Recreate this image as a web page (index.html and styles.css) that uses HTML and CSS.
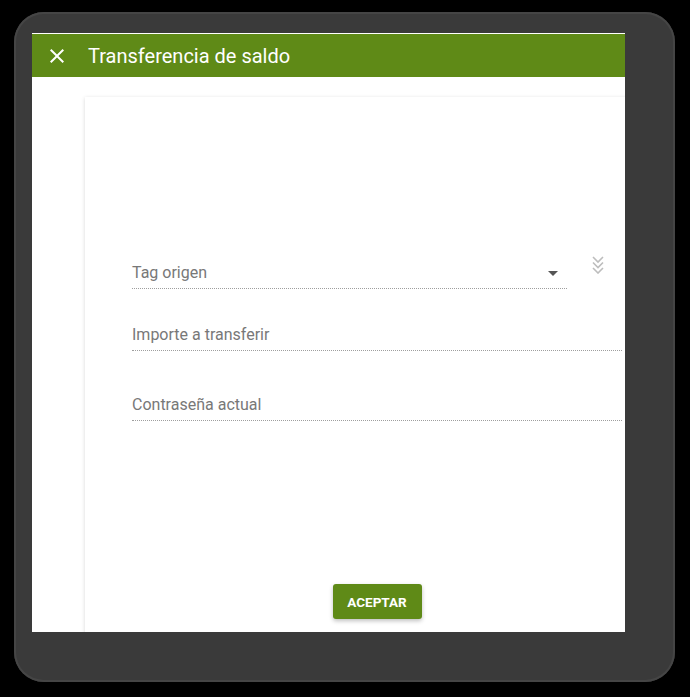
FILE: index.html
```html
<!DOCTYPE html>
<html lang="es">
<head>
  <meta charset="UTF-8">
  <meta name="viewport" content="width=device-width, initial-scale=1.0">
  <title>Transferencia de saldo</title>

  <!-- Styles -->
  <link rel="stylesheet" href="styles.css">
</head>
<body>
  <div class="frame">
    <div class="dialog">
      <header class="toolbar">
        <button class="close-btn" type="button" aria-label="Cerrar">
          <svg width="24" height="24" viewBox="0 0 24 24">
            <path d="M19 6.41L17.59 5 12 10.59 6.41 5 5 6.41 10.59 12 5 17.59 6.41 19 12 13.41 17.59 19 19 17.59 13.41 12z" fill="#fff"/>
          </svg>
        </button>
        <h1>Transferencia de saldo</h1>
      </header>

      <div class="content">
        <form class="card">
          <div class="field-row">
            <div class="field select-field">
              <span class="placeholder">Tag origen</span>
              <span class="caret"></span>
            </div>
            <svg class="more-icon" width="12" height="18" viewBox="0 0 12 18">
              <path d="M1 1l5 5 5-5M1 6.5l5 5 5-5M1 12l5 5 5-5" fill="none" stroke="#bdbdbd" stroke-width="1.6"/>
            </svg>
          </div>

          <div class="field field-amount">
            <span class="placeholder">Importe a transferir</span>
          </div>

          <div class="field field-password">
            <span class="placeholder">Contraseña actual</span>
          </div>

          <div class="actions">
            <button type="submit" class="btn-accept">ACEPTAR</button>
          </div>
        </form>
      </div>
    </div>
  </div>
</body>
</html>
```

FILE: styles.css
```css
* {
  box-sizing: border-box;
  margin: 0;
  padding: 0;
  font-family: 'Roboto', 'Liberation Sans', sans-serif;
}

body {
  background: #000;
  width: 690px;
  height: 697px;
  overflow: hidden;
}

/* Dark frame around the dialog */
.frame {
  margin: 12px 0 0 14px;
  width: 661px;
  height: 670px;
  padding: 21px 50px 50px 18px;
  background: #3a3a3a;
  border-radius: 30px;
  box-shadow: inset 0 0 0 2px #454545;
}

.dialog {
  width: 593px;
  height: 599px;
  background: #fff;
  padding-top: 1px;
  overflow: hidden;
}

/* Toolbar */
.toolbar {
  display: flex;
  align-items: center;
  height: 43px;
  background: #5f8a17;
  padding-left: 13px;
}

.close-btn {
  display: flex;
  background: none;
  border: none;
  cursor: pointer;
}

.toolbar h1 {
  margin-left: 19px;
  color: #fff;
  font-size: 20px;
  font-weight: 400;
  line-height: 24px;
  padding-top: 1px;
}

/* Card */
.content {
  padding: 20px 0 0 53px;
}

.card {
  width: 583px;
  padding: 166px 46px 30px 47px;
  background: #fff;
  box-shadow: 0 1px 4px rgba(0, 0, 0, 0.16);
}

.field {
  position: relative;
  height: 26px;
  padding-bottom: 5px;
  border-bottom: 1px dotted #9e9e9e;
  font-size: 16px;
  line-height: 20px;
  color: #787878;
}

.field-row {
  display: flex;
}

.select-field {
  width: 435px;
}

.caret {
  position: absolute;
  right: 9px;
  top: 8px;
  border-left: 5px solid transparent;
  border-right: 5px solid transparent;
  border-top: 5px solid #555;
}

.more-icon {
  margin: -7px 0 0 25px;
}

.field-amount {
  margin-top: 36px;
}

.field-password {
  margin-top: 44px;
}

.actions {
  display: flex;
  justify-content: center;
  margin-top: 163px;
}

.btn-accept {
  width: 89px;
  height: 35px;
  background: #5f8a17;
  color: #fff;
  border: none;
  border-radius: 3px;
  font-size: 13.5px;
  font-weight: 700;
  cursor: pointer;
  box-shadow: 0 2px 4px rgba(0, 0, 0, 0.25);
}
```
